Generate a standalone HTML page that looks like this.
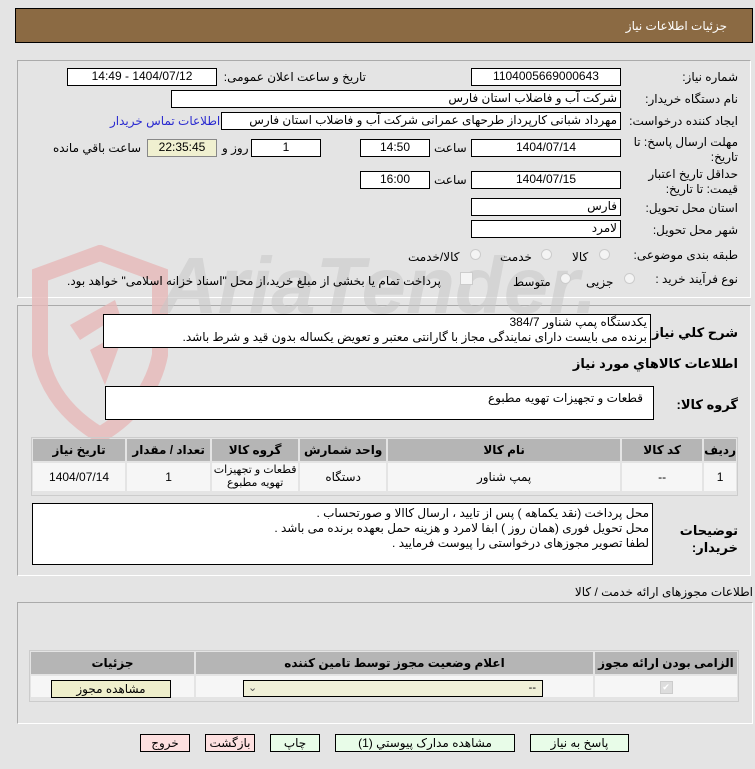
<!DOCTYPE html>
<html><head><meta charset="utf-8"><style>
body{margin:0;width:755px;height:769px;background:#e4e4e4;font-family:"Liberation Sans","DejaVu Sans",sans-serif;font-size:12px;color:#000;position:relative;overflow:hidden}
.a{position:absolute}
.box{position:absolute;background:#fff;border:1px solid #000;box-sizing:border-box;direction:rtl;padding:0 3px;line-height:15px;white-space:nowrap;overflow:hidden}
.c{text-align:center}
.lbl{position:absolute;direction:rtl;white-space:nowrap}
.panel{position:absolute;border:1px solid #aaa;box-sizing:border-box;border-right-color:#fff;border-bottom-color:#fff}
.rad{position:absolute;width:11px;height:11px;border-radius:50%;border:1px solid #ccc;background:#f4f4f4;box-sizing:border-box}
table{border-collapse:separate;border-spacing:2px;position:absolute;font-size:12px;direction:rtl}
th{background:#b5b5b5;font-weight:bold;height:22px;padding:0}
td{background:#f6f6f6;text-align:center;padding:0}
.btn{position:absolute;border:1px solid #000;box-sizing:border-box;height:18px;line-height:16px;text-align:center;background:#e8fce8;direction:rtl}
</style></head><body>
<div class="a" style="left:15px;top:8px;width:738px;height:35px;background:#8b6a43;border:1px solid #000;box-sizing:border-box"></div>
<div class="lbl" style="right:28px;top:19px;color:#fff;font-size:12px">جزئیات اطلاعات نیاز</div>

<div class="panel" style="left:17px;top:60px;width:734px;height:238px"></div>
<div class="panel" style="left:17px;top:305px;width:734px;height:271px"></div>

<!-- watermark -->
<svg class="a" style="left:20px;top:245px" width="200" height="200" viewBox="0 0 200 200"><path d="M20 30 L80 8 L140 30 L140 110 Q130 160 80 190 Q30 160 20 110 Z" fill="none" stroke="#e6b8b8" stroke-width="16" opacity=".8"/><path d="M50 80 L95 55 L100 70 L60 95 Z M70 105 L105 85 L85 140 Z" fill="#e6b8b8" opacity=".8"/></svg>
<div class="a" style="left:160px;top:240px;width:430px;height:110px;overflow:hidden"><div style="font-size:80px;font-weight:bold;color:#c8c8c8;opacity:.55;white-space:nowrap;font-style:italic">AriaTender.net</div></div>

<div class="lbl" style="right:17px;top:70px">شماره نیاز:</div>
<div class="box c" style="left:471px;top:68px;width:150px;height:18px">1104005669000643</div>
<div class="lbl" style="right:389px;top:70px">تاریخ و ساعت اعلان عمومی:</div>
<div class="box c" style="left:67px;top:68px;width:150px;height:18px">1404/07/12 - 14:49</div>

<div class="lbl" style="right:17px;top:92px">نام دستگاه خریدار:</div>
<div class="box" style="left:171px;top:90px;width:450px;height:18px">شرکت آب و فاضلاب استان فارس</div>

<div class="lbl" style="right:17px;top:114px">ایجاد کننده درخواست:</div>
<div class="box" style="left:221px;top:112px;width:400px;height:18px">مهرداد شبانی کارپرداز طرحهای عمرانی  شرکت آب و فاضلاب استان فارس</div>
<div class="lbl" style="left:110px;top:114px;color:#2a2ad0">اطلاعات تماس خریدار</div>

<div class="lbl" style="right:17px;top:135px;line-height:15px;text-align:right">مهلت ارسال پاسخ: تا<br>تاریخ:</div>
<div class="box c" style="left:471px;top:139px;width:150px;height:18px">1404/07/14</div>
<div class="lbl" style="left:434px;top:141px">ساعت</div>
<div class="box c" style="left:360px;top:139px;width:70px;height:18px">14:50</div>
<div class="box c" style="left:251px;top:139px;width:70px;height:18px">1</div>
<div class="lbl" style="left:222px;top:141px">روز و</div>
<div class="box c" style="left:147px;top:139px;width:70px;height:18px;background:#f0f0d0;border-color:#888">22:35:45</div>
<div class="lbl" style="left:53px;top:141px">ساعت باقي مانده</div>

<div class="lbl" style="right:17px;top:167px;line-height:15px;text-align:right">حداقل تاریخ اعتبار<br>قیمت: تا تاریخ:</div>
<div class="box c" style="left:471px;top:171px;width:150px;height:18px">1404/07/15</div>
<div class="lbl" style="left:434px;top:173px">ساعت</div>
<div class="box c" style="left:360px;top:171px;width:70px;height:18px">16:00</div>

<div class="lbl" style="right:17px;top:201px">استان محل تحویل:</div>
<div class="box" style="left:471px;top:198px;width:150px;height:18px">فارس</div>
<div class="lbl" style="right:17px;top:223px">شهر محل تحویل:</div>
<div class="box" style="left:471px;top:220px;width:150px;height:18px">لامرد</div>

<div class="lbl" style="right:17px;top:248px">طبقه بندی موضوعی:</div>
<div class="rad" style="left:599px;top:249px"></div><div class="lbl" style="left:572px;top:250px">کالا</div>
<div class="rad" style="left:541px;top:249px"></div><div class="lbl" style="left:500px;top:250px">خدمت</div>
<div class="rad" style="left:470px;top:249px"></div><div class="lbl" style="left:408px;top:250px">کالا/خدمت</div>

<div class="lbl" style="right:17px;top:272px">نوع فرآیند خرید :</div>
<div class="rad" style="left:624px;top:273px"></div><div class="lbl" style="left:586px;top:275px">جزیی</div>
<div class="rad" style="left:560px;top:273px"></div><div class="lbl" style="left:513px;top:275px">متوسط</div>
<div class="a" style="left:460px;top:272px;width:11px;height:11px;border:1px solid #ccc;background:#f4f4f4"></div>
<div class="lbl" style="left:67px;top:274px">پرداخت تمام یا بخشی از مبلغ خرید،از محل "اسناد خزانه اسلامی" خواهد بود.</div>

<div class="lbl" style="right:17px;top:325px;font-weight:bold;font-size:13px">شرح کلي نیاز:</div>
<div class="box" style="left:103px;top:314px;width:548px;height:34px;white-space:normal;line-height:15px">یکدستگاه پمپ شناور 384/7<br>برنده می بایست دارای نمایندگی مجاز با گارانتی معتبر و تعویض یکساله بدون قید و شرط باشد.</div>
<div class="lbl" style="right:17px;top:356px;font-weight:bold;font-size:13px">اطلاعات کالاهاي مورد نیاز</div>

<div class="lbl" style="right:17px;top:397px;font-weight:bold;font-size:13px">گروه کالا:</div>
<div class="box" style="left:105px;top:386px;width:549px;height:34px;padding-right:10px;line-height:22px">قطعات و تجهیزات تهویه مطبوع</div>

<div class="a" style="left:31px;top:437px;width:707px;height:59px;border:1px solid #ccc;box-sizing:border-box"></div>
<table style="left:31px;top:437px;width:707px">
<tr><th style="width:26px">ردیف</th><th style="width:80px">کد کالا</th><th style="width:232px">نام کالا</th><th style="width:86px">واحد شمارش</th><th style="width:86px">گروه کالا</th><th style="width:83px">تعداد / مقدار</th><th>تاریخ نیاز</th></tr>
<tr style="height:28px"><td>1</td><td>--</td><td>پمپ شناور</td><td>دستگاه</td><td style="line-height:13px;font-size:11px">قطعات و تجهیزات<br>تهویه مطبوع</td><td>1</td><td>1404/07/14</td></tr>
</table>

<div class="lbl" style="right:17px;top:522px;font-weight:bold;font-size:13px;line-height:17px;text-align:right">توضیحات<br>خریدار:</div>
<div class="box" style="left:32px;top:503px;width:621px;height:62px;white-space:normal;line-height:15px;padding-top:2px">محل پرداخت (نقد یکماهه ) پس از تایید ، ارسال کاالا و صورتحساب .<br>محل تحویل فوری (همان روز ) ابفا لامرد و هزینه حمل بعهده برنده می باشد .<br>لطفا تصویر مجوزهای درخواستی را پیوست فرمایید .</div>

<div class="lbl" style="right:2px;top:585px">اطلاعات مجوزهای ارائه خدمت / کالا</div>
<div class="panel" style="left:17px;top:602px;width:736px;height:122px"></div>
<div class="a" style="left:29px;top:650px;width:710px;height:52px;border:1px solid #ccc;box-sizing:border-box"></div>
<table style="left:29px;top:650px;width:710px">
<tr><th style="width:142px">الزامی بودن ارائه مجوز</th><th style="width:397px">اعلام وضعیت مجوز توسط تامین کننده</th><th>جزئیات</th></tr>
<tr style="height:21px"><td><span style="display:inline-block;width:11px;height:11px;border:1px solid #ccc;background:#ddd;font-size:9px;line-height:11px;color:#fff">✔</span></td><td></td><td></td></tr>
</table>
<div class="a" style="left:243px;top:680px;width:300px;height:17px;border:1px solid #000;box-sizing:border-box;background:#f0f0d8;font-size:11px;line-height:15px"><span style="position:absolute;left:4px;color:#555">⌄</span><span style="position:absolute;right:6px">--</span></div>
<div class="btn" style="left:51px;top:680px;width:120px;height:18px;background:#efefcc">مشاهده مجوز</div>

<div class="btn" style="left:530px;top:734px;width:99px">پاسخ به نیاز</div>
<div class="btn" style="left:335px;top:734px;width:180px">مشاهده مدارک پیوستي (1)</div>
<div class="btn" style="left:270px;top:734px;width:50px">چاپ</div>
<div class="btn" style="left:205px;top:734px;width:50px;background:#fde0e0">بازگشت</div>
<div class="btn" style="left:140px;top:734px;width:50px;background:#fde0e0">خروج</div>
</body></html>
